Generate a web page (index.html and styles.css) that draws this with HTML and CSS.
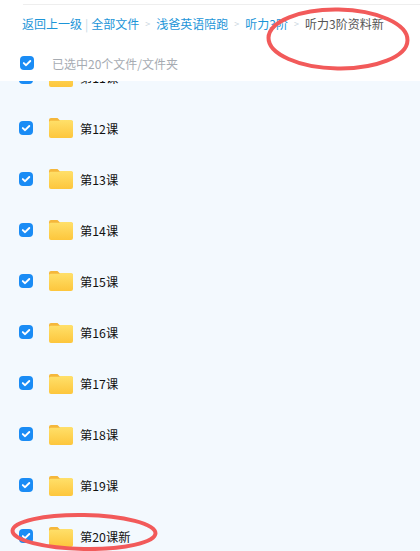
FILE: index.html
```html
<!DOCTYPE html>
<html lang="zh">
<head>
<meta charset="utf-8">
<title>文件列表</title>
<link rel="stylesheet" href="styles.css">
</head>
<body>
<svg width="0" height="0" class="defs" aria-hidden="true">
  <defs>
    <linearGradient id="fold" x1="0" y1="0" x2="0" y2="1">
      <stop offset="0" stop-color="#ffe06a"/>
      <stop offset="1" stop-color="#fdc63c"/>
    </linearGradient>
  </defs>
  <symbol id="check" viewBox="0 0 14 14">
    <rect width="14" height="14" rx="4" fill="#1a8cf5"/>
    <path d="M3.800 7.100 6.100 9.200 10.300 5" fill="none" stroke="#fff" stroke-width="1.900" stroke-linecap="round" stroke-linejoin="round"/>
  </symbol>
  <symbol id="folder" viewBox="0 0 24 21">
    <path d="M0 3a2 2 0 0 1 2-2h6.500l2.500 2.500h11a2 2 0 0 1 2 2V10H0z" fill="#f5b73b"/>
    <path d="M0 6a2 2 0 0 1 2-2.200h7.500c1.200 0 1.500-.8 3-.8H22a2 2 0 0 1 2 2v14a2 2 0 0 1-2 2H2a2 2 0 0 1-2-2z" fill="url(#fold)"/>
  </symbol>
</svg>
<div class="page">
  <header class="head">
    <div class="rule"></div>
    <nav class="crumbs">
      <a>返回上一级</a><span class="bar">|</span><a>全部文件</a><span class="sep">&gt;</span><a>浅爸英语陪跑</a><span class="sep">&gt;</span><a>听力3阶</a><span class="sep">&gt;</span><span class="cur">听力3阶资料新</span>
    </nav>
    <div class="selected">
      <svg class="box"><use href="#check"/></svg>
      <span>已选中20个文件/文件夹</span>
    </div>
  </header>
  <ul class="list">
    <li class="row"><svg class="box"><use href="#check"/></svg><svg class="folder"><use href="#folder"/></svg><span>第11课</span></li>
    <li class="row"><svg class="box"><use href="#check"/></svg><svg class="folder"><use href="#folder"/></svg><span>第12课</span></li>
    <li class="row"><svg class="box"><use href="#check"/></svg><svg class="folder"><use href="#folder"/></svg><span>第13课</span></li>
    <li class="row"><svg class="box"><use href="#check"/></svg><svg class="folder"><use href="#folder"/></svg><span>第14课</span></li>
    <li class="row"><svg class="box"><use href="#check"/></svg><svg class="folder"><use href="#folder"/></svg><span>第15课</span></li>
    <li class="row"><svg class="box"><use href="#check"/></svg><svg class="folder"><use href="#folder"/></svg><span>第16课</span></li>
    <li class="row"><svg class="box"><use href="#check"/></svg><svg class="folder"><use href="#folder"/></svg><span>第17课</span></li>
    <li class="row"><svg class="box"><use href="#check"/></svg><svg class="folder"><use href="#folder"/></svg><span>第18课</span></li>
    <li class="row"><svg class="box"><use href="#check"/></svg><svg class="folder"><use href="#folder"/></svg><span>第19课</span></li>
    <li class="row"><svg class="box"><use href="#check"/></svg><svg class="folder"><use href="#folder"/></svg><span>第20课新</span></li>
  </ul>
  <svg class="marks" viewBox="0 0 420 551" aria-hidden="true">
    <ellipse cx="338" cy="39" rx="69.500" ry="29.500" transform="rotate(1 338 39)"/>
    <ellipse cx="84" cy="532" rx="71.500" ry="17" transform="rotate(1 84 532)"/>
  </svg>
</div>
</body>
</html>
```
FILE: styles.css
```css
* { box-sizing: border-box; }
html, body { margin: 0; height: 100%; overflow: hidden; }
body { font-family: "Noto Sans CJK SC", "Liberation Sans", sans-serif; }
.defs { position: absolute; }
.page { position: relative; width: 420px; height: 551px; overflow: hidden; background: #f3f9fe; }

.head {
  position: absolute; top: 0; left: 0; right: 0; z-index: 1;
  height: 81px; background: #fff;
}
.rule { height: 1px; margin: 4px 0 0 23px; background: #eeeeee; }
.crumbs {
  display: flex; align-items: center;
  margin: 10px 0 0 22px; height: 18px;
  font-size: 12px; line-height: 18px; white-space: nowrap; color: #1c95d8;
}
.bar { margin: 0 3px; color: #c6d8e6; }
.sep { margin: 0 6px; color: #c9d5de; font-size: 9px; }
.cur { color: #555; }
.selected {
  display: flex; align-items: center; gap: 18px;
  margin: 20px 0 0 20px; height: 20px;
  font-size: 12px; color: #a6abb2;
}
.box { width: 14px; height: 14px; flex: none; }

.list { list-style: none; margin: 0; padding: 51px 0 0 19px; }
.row {
  display: flex; align-items: center; height: 51.1px;
  font-size: 12.3px; color: #111;
}
.row span { position: relative; top: 1px; }
.folder { width: 24px; height: 21px; flex: none; margin: 0 7px 0 16px; }

.marks {
  position: absolute; inset: 0; z-index: 2; width: 420px; height: 551px; pointer-events: none;
}
.marks ellipse { fill: none; stroke: #f25a5a; stroke-width: 4; }
```
